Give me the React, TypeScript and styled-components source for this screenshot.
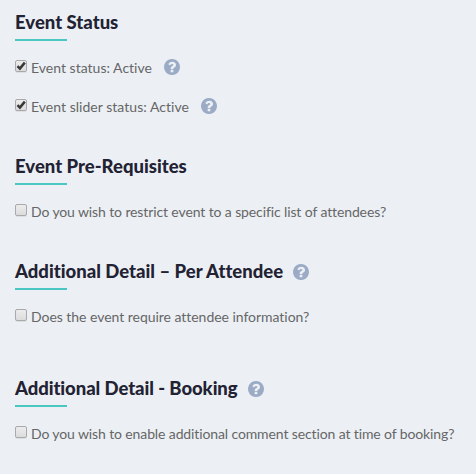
import React, { useState } from 'react';
import styled, { createGlobalStyle } from 'styled-components';

const GlobalStyle = createGlobalStyle`
  * { box-sizing: border-box; }
  body {
    margin: 0;
    background: #ecf0f5;
    font-family: Lato, "Liberation Sans", sans-serif;
    font-variant-ligatures: none;
  }
`;

const Page = styled.main`
  min-height: 474px;
  padding: 8px 15px 0;
  background: #ecf0f5;
`;

const Section = styled.section<{ $gap: number }>`
  margin-bottom: ${({ $gap }) => $gap}px;
`;

const Heading = styled.header`
  display: flex;
  align-items: flex-start;
  gap: 10px;
  height: 31px;
`;

const Title = styled.h4<{ $tracking: number }>`
  margin: 0;
  padding-top: 1px;
  color: #222233;
  font-size: 18.5px;
  font-weight: 900;
  letter-spacing: ${({ $tracking }) => $tracking}px;
  line-height: 26px;
  white-space: nowrap;
`;

const Underline = styled.div`
  width: 52px;
  height: 2px;
  background: #4ac6c3;
`;

const Options = styled.div`
  display: flex;
  flex-direction: column;
  gap: 13px;
  padding-top: 14px;
`;

const Option = styled.div`
  display: flex;
  align-items: flex-start;
  height: 26px;
`;

const OptionLabel = styled.label<{ $tracking: number }>`
  display: flex;
  align-items: flex-start;
  gap: 4px;
  color: #666666;
  font-size: 14px;
  letter-spacing: ${({ $tracking }) => $tracking}px;
  line-height: 26px;
  white-space: nowrap;
`;

const Checkbox = styled.input`
  appearance: none;
  flex: none;
  width: 12px;
  height: 12px;
  margin: 5px 0 0;
  border: 1px solid #a9a9a9;
  border-radius: 2px;
  background: linear-gradient(#ececec, #dcdcdc);
  box-shadow: 0 1px 0 rgba(0, 0, 0, 0.07);

  &:checked {
    background:
      url("data:image/svg+xml,%3Csvg xmlns='http://www.w3.org/2000/svg' viewBox='0 0 10 10'%3E%3Cpath d='M1.5 5.2L3.9 7.6L8.8 1.6' fill='none' stroke='%23383838' stroke-width='2.5'/%3E%3C/svg%3E") center / 10px 10px no-repeat,
      linear-gradient(#ececec, #dcdcdc);
  }
`;

const HelpSvg = styled.svg<{ $top: number; $left?: number }>`
  flex: none;
  width: 16px;
  height: 16px;
  margin-top: ${({ $top }) => $top}px;
  margin-left: ${({ $left = 0 }) => $left}px;
  fill: #9baac5;
`;

const HelpIcon = ({ top, left }: { top: number; left?: number }) => (
  <HelpSvg $top={top} $left={left} viewBox="128 128 1536 1536" aria-hidden="true">
    <path d="M1024 1376v-192q0-14-9-23t-23-9h-192q-14 0-23 9t-9 23v192q0 14 9 23t23 9h192q14 0 23-9t9-23zm256-672q0-88-55.5-163t-138.5-116-170-41q-243 0-371 213-15 24 8 42l132 100q7 6 19 6 16 0 25-12 53-68 86-92 34-24 86-24 48 0 85.5 26t37.5 59q0 38-20 61t-68 45q-63 28-115.5 86.5t-52.5 125.5v36q0 14 9 23t23 9h192q14 0 23-9t9-23q0-19 21.5-49.5t54.5-49.5q32-18 49-28.5t46-35 44.5-48 28-60.5 12.5-81zm384 192q0 209-103 385.5t-279.5 279.5-385.5 103-385.5-103-279.5-279.5-103-385.5 103-385.5 279.5-279.5 385.5-103 385.5 103 279.5 279.5 103 385.5z" />
  </HelpSvg>
);

interface OptionData {
  text: string;
  tracking?: number;
  checked?: boolean;
  help?: boolean;
}

interface SectionData {
  title: string;
  tracking?: number;
  help?: boolean;
  gap: number;
  options: OptionData[];
}

const sections: SectionData[] = [
  {
    title: 'Event Status',
    gap: 32,
    options: [
      { text: 'Event status: Active', tracking: 0.01, checked: true, help: true },
      { text: 'Event slider status: Active', tracking: 0.03, checked: true, help: true },
    ],
  },
  {
    title: 'Event Pre-Requisites',
    gap: 32,
    options: [
      {
        text: 'Do you wish to restrict event to a specific list of attendees?',
        tracking: -0.115,
      },
    ],
  },
  {
    title: 'Additional Detail – Per Attendee',
    help: true,
    gap: 44,
    options: [{ text: 'Does the event require attendee information?', tracking: -0.035 }],
  },
  {
    title: 'Additional Detail - Booking',
    tracking: -0.07,
    help: true,
    gap: 0,
    options: [
      {
        text: 'Do you wish to enable additional comment section at time of booking?',
        tracking: -0.118,
      },
    ],
  },
];

const OptionRow = ({ text, tracking = 0, checked = false, help }: OptionData) => {
  const [on, setOn] = useState(checked);
  return (
    <Option>
      <OptionLabel $tracking={tracking}>
        <Checkbox type="checkbox" checked={on} onChange={() => setOn(!on)} />
        {text}
      </OptionLabel>
      {help && <HelpIcon top={4} left={12} />}
    </Option>
  );
};

export default function App() {
  return (
    <>
      <GlobalStyle />
      <Page>
        {sections.map((section) => (
          <Section key={section.title} $gap={section.gap}>
            <Heading>
              <Title $tracking={section.tracking ?? 0}>{section.title}</Title>
              {section.help && <HelpIcon top={7} />}
            </Heading>
            <Underline />
            <Options>
              {section.options.map((option) => (
                <OptionRow key={option.text} {...option} />
              ))}
            </Options>
          </Section>
        ))}
      </Page>
    </>
  );
}
